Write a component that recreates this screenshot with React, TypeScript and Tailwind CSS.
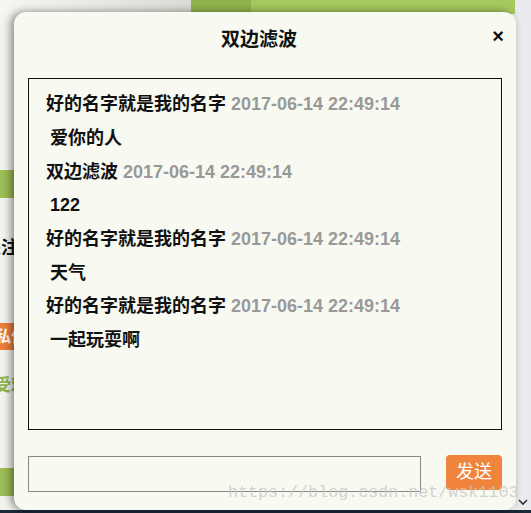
import React from 'react'

const messages = [
  { name: '好的名字就是我的名字', time: '2017-06-14 22:49:14', text: '爱你的人' },
  { name: '双边滤波', time: '2017-06-14 22:49:14', text: '122' },
  { name: '好的名字就是我的名字', time: '2017-06-14 22:49:14', text: '天气' },
  { name: '好的名字就是我的名字', time: '2017-06-14 22:49:14', text: '一起玩耍啊' },
]

export default function App() {
  return (
    <div
      className="relative w-[531px] h-[513px] overflow-hidden bg-[#f3f4ee]"
      style={{ fontFamily: '"Liberation Sans", "Noto Sans CJK SC", sans-serif' }}
    >
      {/* Page behind the dialog */}
      <div className="flex h-[510px]">
        <div className="flex flex-col w-[515px]">
          <div className="flex h-[14px]">
            <div className="w-[191px] bg-gradient-to-r from-[#f6f6f4] to-[#dcdcd6]"></div>
            <div className="w-[60px] bg-[#93b34f]"></div>
            <div className="flex-1 bg-[#a8c95f]"></div>
          </div>
          <div className="h-[156px]"></div>
          <div className="h-[28px] bg-[#9dbd56]"></div>
          <div className="h-[40px]"></div>
          <div className="-ml-[17px] text-[18px] font-bold text-[#111] leading-[20px]">关注</div>
          <div className="h-[65px]"></div>
          <div className="w-[60px] h-[27px] bg-[#ee7f3a] -ml-[5px] text-[16px] text-white leading-[27px] font-bold">私信</div>
          <div className="h-[26px]"></div>
          <div className="-ml-[6px] text-[17px] font-bold text-[#93b54f] leading-[20px]">受欢迎</div>
          <div className="h-[72px]"></div>
          <div className="h-[28px] bg-[#9dbd56]"></div>
        </div>
        <div className="flex-1 flex flex-col justify-end items-center bg-[#ebebef] pb-[4px]">
          <svg width="10" height="7" viewBox="0 0 10 7">
            <path d="M1 1 L5 5 L9 1" fill="none" stroke="#333" strokeWidth="1.6" />
          </svg>
        </div>
      </div>
      <div className="h-[3px] bg-[#1c2838]"></div>

      {/* Chat dialog */}
      <div className="absolute left-[14px] top-[12px] w-[502px] h-[498px] rounded-[12px] bg-[#f8f9f1] shadow-[-3px_0_8px_rgba(0,0,0,0.45)] flex flex-col px-[14px]">
        <div className="relative h-[54px] flex items-center justify-center pr-[12px]">
          <span className="text-[19px] font-bold text-[#111] pt-[2px]">双边滤波</span>
          <span className="absolute right-[-2px] top-[14px] text-[20px] font-bold text-[#111] leading-[20px]">×</span>
        </div>
        <div className="mt-[12px] h-[352px] border border-[#111] pt-[9px] pl-[17px]">
          {messages.map((m, i) => (
            <div key={i} className="flex flex-col">
              <div className="h-[33.7px] flex items-center whitespace-nowrap">
                <span className="text-[18px] font-bold text-[#111]">{m.name}</span>
                <span className="ml-[5px] text-[18px] font-bold text-[#999]">{m.time}</span>
              </div>
              <div className="h-[33.7px] flex items-center pl-[4px] text-[18px] font-bold text-[#111]">{m.text}</div>
            </div>
          ))}
        </div>
        <div className="mt-[25px] flex items-start justify-between">
          <input className="mt-[1px] w-[393px] h-[36px] border border-[#888] bg-transparent outline-none" />
          <button className="w-[56px] h-[35px] rounded-[4px] bg-[#f0843c] text-white text-[18px] leading-[35px]">发送</button>
        </div>
      </div>

      {/* Watermark */}
      <div
        className="absolute left-[228px] top-[482px] text-[16.7px] leading-[22px] text-[#c9c9c3]/80 whitespace-nowrap"
        style={{ fontFamily: '"Liberation Mono", monospace' }}
      >
        https://blog.csdn.net/wsk1103
      </div>
    </div>
  )
}
